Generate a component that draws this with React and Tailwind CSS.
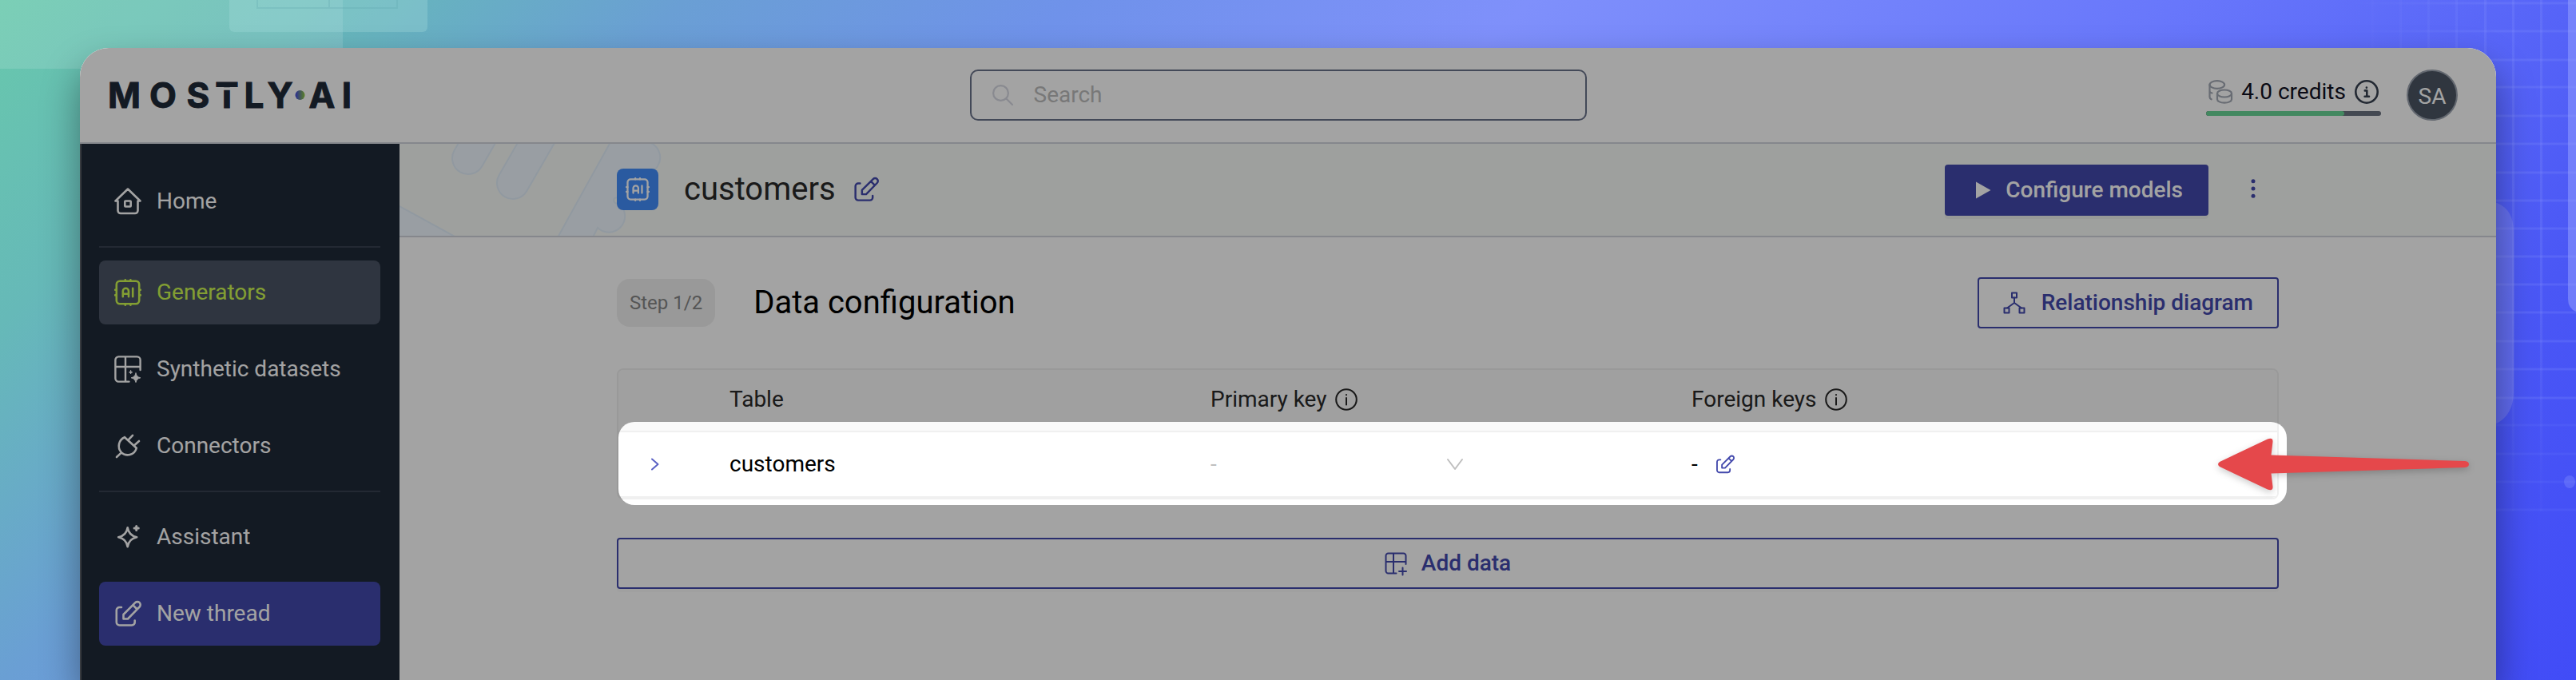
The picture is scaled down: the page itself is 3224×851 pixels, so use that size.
import React from "react";

function Icon({ box = 34, className = "", stroke = 2.6, children }) {
  return (
    <svg
      viewBox={`0 0 ${box} ${box}`}
      className={`shrink-0 overflow-visible ${className}`}
      fill="none"
      stroke="currentColor"
      strokeWidth={stroke}
      strokeLinecap="round"
      strokeLinejoin="round"
      aria-hidden="true"
    >
      {children}
    </svg>
  );
}

const HomeIcon = (p) => (
  <Icon {...p}>
    <path d="M1.5 16.5H4.5V28.5a3.5 3.5 0 0 0 3.5 3.5H26a3.5 3.5 0 0 0 3.5-3.5V16.5H32.5L17 1.5Z" />
    <rect x="13.3" y="16.5" width="7.4" height="7" rx="0.8" />
  </Icon>
);

const ChipIcon = (p) => (
  <Icon {...p}>
    <rect x="2.8" y="2.8" width="28.4" height="28.4" rx="4.2" />
    <path d="M13.8 2.8V1.2M20.4 2.8V1.2M13.8 31.2v1.6M20.4 31.2v1.6M2.8 13.8H1.2M2.8 20.4H1.2M31.2 13.8h1.6M31.2 20.4h1.6" />
    <path d="M10.8 22.2V15.4a3.6 3.6 0 0 1 7.2 0V22.2M10.8 18.8H18M23.2 11.8V22.2" />
  </Icon>
);

const DatasetIcon = (p) => (
  <Icon {...p} stroke={2.4}>
    <path d="M18.5 32.6H5.4a4 4 0 0 1-4-4V5.4a4 4 0 0 1 4-4H28.6a4 4 0 0 1 4 4V18M1.4 14H32.6M14 1.4V32.6" />
    <path
      d="M27 22c1 3.600 2.200 4.800 5.800 5.800-3.600 1-4.800 2.200-5.800 5.800-1-3.600-2.200-4.800-5.800-5.800 3.600-1 4.800-2.200 5.800-5.800ZM20.600 18.800c.4 1.300.8 1.700 2 2.100-1.200.4-1.600.8-2 2-.4-1.200-.8-1.600-2-2 1.200-.4 1.600-.8 2-2.100Z"
      fill="currentColor"
      strokeWidth="1"
    />
  </Icon>
);

const PlugIcon = (p) => (
  <Icon {...p}>
    <path d="M13 6.200 27.800 19.800M13 6.200C5.500 9.500 3.200 19 9 25.400 14.500 30.600 25.500 29 27.800 19.800M18 9.200l5-5.400M25.200 16.200l5.800-5.200M9 25.400 3 31" />
  </Icon>
);

const AssistantIcon = (p) => (
  <Icon {...p}>
    <path d="M16.700 5.200c1 6.600 4.200 10.500 11.500 12-7.300 1.500-10.500 5.200-11.500 12-1-6.800-4.200-10.500-11.500-12 7.300-1.500 10.500-5.400 11.500-12Z" />
    <path d="M27.700 3.400v5.200M25.100 6h5.200" strokeWidth="3" />
  </Icon>
);

const EditIcon = (p) => (
  <Icon {...p}>
    <path d="M9 9H6.500a3.700 3.700 0 0 0-3.700 3.700V27.800a3.700 3.700 0 0 0 3.700 3.700H22a3.700 3.700 0 0 0 3.700-3.700V25.500" />
    <path d="M11.500 23.500V18L26.300 3.200a3.700 3.700 0 0 1 5.300 5.300L17 23.500ZM23.300 6.200l5.300 5.300" />
  </Icon>
);

const AddTableIcon = (p) => (
  <Icon {...p} box={28} stroke={2}>
    <path d="M14.500 26.500H4.500a3 3 0 0 1-3-3V4.500a3 3 0 0 1 3-3h19a3 3 0 0 1 3 3V15M1.500 12h25M11 1.500v25M22.500 19.500v9M18 24h9" />
  </Icon>
);

const InfoIcon = ({ serif, ...p }) => (
  <Icon {...p} box={30}>
    <circle cx="15" cy="15" r="13.700" />
    {serif ? (
      <path d="M12.800 13.400H15.300V20.600M12.600 20.800h5.400M14.900 9.600v.2" />
    ) : (
      <path d="M15 13v9M15 8.600v.2" />
    )}
  </Icon>
);

const CoinsIcon = (p) => (
  <Icon {...p} box={30} stroke={2.2}>
    <ellipse cx="10.800" cy="6" rx="9.300" ry="4.800" />
    <path d="M1.500 6V21.500c0 1.300.8 2 2.200 2.800M1.500 14.500c.6.900 1.500 1.500 3 2" />
    <ellipse cx="20" cy="17" rx="9" ry="4.500" />
    <path d="M11 17v7.200c0 2.500 4 4.500 9 4.500s9-2 9-4.500V17" />
  </Icon>
);

const DiagramIcon = (p) => (
  <Icon {...p} box={28} stroke={2}>
    <rect x="11" y="1.500" width="6" height="6" />
    <rect x="1.500" y="20.500" width="6" height="6" />
    <rect x="20.500" y="20.500" width="6" height="6" />
    <path d="M14 7.500V14L5 20.500M14 14l9 6.500" />
  </Icon>
);

function Logo() {
  return (
    <a href="#home" aria-label="MOSTLY AI" className="block text-[#1f2937]">
      <svg viewBox="0 0 302 36" className="h-9 w-[302px] overflow-visible">
        <defs>
          <linearGradient id="logo-dot">
            <stop offset="0.1" stopColor="#4a52d8" />
            <stop offset="1" stopColor="#8ecb3a" />
          </linearGradient>
        </defs>
        <g
          fill="currentColor"
          stroke="currentColor"
          strokeWidth="1"
          textAnchor="middle"
          className="font-['Inter'] text-[44px] font-bold"
        >
          <text x="19.500 68 112 148 182 214.500" y="34">MOSTLY</text>
          <text x="267 298" y="34">AI</text>
        </g>
        <circle cx="239.500" cy="18" r="6" fill="url(#logo-dot)" />
        <path d="M133 10h30" stroke="#fff" strokeWidth="3.500" />
        <path d="M254 27.500h8" stroke="#fff" strokeWidth="0" />
      </svg>
    </a>
  );
}

function Header() {
  return (
    <header className="flex h-[120px] items-center justify-between border-b-2 border-[#d0d4dc] bg-white pr-12 pl-9">
      <Logo />
      <label className="flex h-16 w-[772px] items-center gap-[26px] rounded-[10px] border-2 border-[#6a728a] px-[26px]">
        <Icon box={26} stroke={2.2} className="size-[26px] text-[#d6d8e2]">
          <circle cx="10.500" cy="10.500" r="9.400" />
          <path d="M17.500 17.500 25 25" />
        </Icon>
        <input
          type="text"
          aria-label="Search"
          placeholder="Search"
          className="w-full bg-transparent text-[28px] outline-none placeholder:text-[#bcbcbc]"
        />
      </label>
      <div className="flex items-center gap-8">
        <div className="flex w-[219px] flex-col gap-[2px]">
          <div className="flex h-11 items-center justify-between px-[3px]">
            <CoinsIcon className="size-[30px] text-[#a3a9b5]" />
            <span className="text-[28px] text-[#111122]">4.0 credits</span>
            <InfoIcon serif className="size-[30px] text-[#374151]" />
          </div>
          <div className="h-[6px] overflow-hidden rounded-full bg-[#6b7280]">
            <div className="h-full w-[79%] rounded-full bg-[#6ad596]" />
          </div>
        </div>
        <button
          type="button"
          aria-label="Account SA"
          className="flex size-16 items-center justify-center rounded-full border-2 border-[#9ca3af] bg-[#4b5563] pt-1 text-[28px] text-white"
        >
          SA
        </button>
      </div>
    </header>
  );
}

function NavItem({ icon: I, label, className = "text-white" }) {
  return (
    <li>
      <a
        href={`#${label.toLowerCase().replace(" ", "-")}`}
        className={`flex h-20 items-center gap-[19px] rounded-lg pl-[19px] text-[28px] ${className}`}
      >
        <I className="size-[34px]" />
        {label}
      </a>
    </li>
  );
}

function Sidebar() {
  return (
    <nav
      aria-label="Main"
      className="w-[400px] shrink-0 border-l-2 border-[#565b63] bg-[#1f2937] pt-8 pr-6 pl-[22px]"
    >
      <ul className="flex flex-col gap-4">
        <NavItem icon={HomeIcon} label="Home" />
        <li role="separator" className="h-[2px] bg-[#374151]" />
        <NavItem icon={ChipIcon} label="Generators" className="bg-[#4a5364] text-[#cef850]" />
        <NavItem icon={DatasetIcon} label="Synthetic datasets" />
        <NavItem icon={PlugIcon} label="Connectors" />
        <li role="separator" className="h-[2px] bg-[#374151]" />
        <NavItem icon={AssistantIcon} label="Assistant" />
        <NavItem icon={EditIcon} label="New thread" className="bg-[#4349ac] text-white" />
      </ul>
    </nav>
  );
}

function BandPattern() {
  return (
    <svg
      className="absolute top-0 left-0 h-[115px] w-[340px]"
      viewBox="0 0 340 115"
      fill="#eff8ff"
      stroke="#e3effb"
      strokeWidth="2"
      aria-hidden="true"
    >
      <rect x="-20" y="-100" width="40" height="120" rx="20" transform="translate(86 18) rotate(30)" />
      <rect x="-20" y="-120" width="40" height="140" rx="20" transform="translate(142 49) rotate(30)" />
      <path d="M-2 77 71 117H-2Z" />
      <path d="M264-2 198 117H242L248 105A20 20 0 1 0 276 76L270 74Q267 72 269 68L300 60 323 28A20 20 0 0 0 312-2Z" />
    </svg>
  );
}

function TitleBand() {
  return (
    <div className="relative border-b-2 border-[#d0d4dc] bg-[#f8fbf8]">
      <BandPattern />
      <div className="relative mx-auto flex h-[115px] max-w-[2080px] items-center">
        <div className="flex items-center pb-[2px]">
          <span className="flex size-13 items-center justify-center rounded-lg bg-[#438dfa] text-white">
            <ChipIcon className="size-[30px]" />
          </span>
          <h1 className="ml-8 text-[40px] text-[#292929]">customers</h1>
          <button type="button" aria-label="Rename" className="ml-[22px] text-[#4349ac]">
            <EditIcon className="size-8" />
          </button>
        </div>
        <button
          type="button"
          className="ml-auto flex h-16 items-center gap-4 rounded bg-[#4349ac] px-8 text-[28px] font-medium text-white shadow-[0_4px_0_rgba(0,0,0,0.04)]"
        >
          <svg viewBox="0 0 28 28" className="size-7" fill="currentColor" aria-hidden="true">
            <path d="M7 3.500 25.500 14 7 24.500Z" />
          </svg>
          Configure models
        </button>
        <button
          type="button"
          aria-label="More actions"
          className="ml-6 flex size-16 items-center justify-center pb-1 text-[#4349ac]"
        >
          <svg viewBox="0 0 28 28" className="size-7" fill="currentColor" aria-hidden="true">
            <circle cx="14" cy="4.700" r="2.500" />
            <circle cx="14" cy="14" r="2.500" />
            <circle cx="14" cy="23.300" r="2.500" />
          </svg>
        </button>
      </div>
    </div>
  );
}

function Arrow() {
  return (
    <svg
      viewBox="0 0 314 66"
      className="absolute top-[87px] -right-[238px] z-20 h-[66px] w-[314px] overflow-visible drop-shadow-[0_3px_4px_rgba(0,0,0,0.2)]"
      fill="#e5484b"
      aria-hidden="true"
    >
      <path d="M2 30 62 1.500Q69-1 68.500 5L66.500 21.500 309 29Q314 29.500 314 33T309 37L66.500 44.500 68.500 61Q69 67 62 64.500L2 36Q-2 33 2 30Z" />
    </svg>
  );
}

function DataTable() {
  const th = "h-[78px] border-b-2 border-[#f0f0f0] px-4 pb-[2px] font-normal";
  const td = "h-[82px] border-b-2 border-[#f0f0f0]";
  return (
    <div className="relative">
      <div className="overflow-hidden rounded-lg border-2 border-[#f0f0f0]">
        <table className="w-full table-fixed border-separate border-spacing-0 text-left text-[28px] leading-10">
          <colgroup>
            <col className="w-[123px]" />
            <col className="w-[29%]" />
            <col className="w-[29%]" />
            <col />
          </colgroup>
          <thead>
            <tr className="bg-[#fafafa] text-[#292929]">
              <th aria-label="Expand" className={th} />
              <th className={th}>Table</th>
              <th className={th}>
                <span className="flex items-center gap-[10px]">
                  Primary key
                  <InfoIcon stroke={2.2} className="size-7" />
                </span>
              </th>
              <th className={th}>
                <span className="flex items-center gap-[10px]">
                  Foreign keys
                  <InfoIcon stroke={2.2} className="size-7" />
                </span>
              </th>
            </tr>
          </thead>
          <tbody>
            <tr className="bg-white text-black">
              <td className={`pl-8 ${td}`}>
                <button
                  type="button"
                  aria-label="Expand customers"
                  className="flex size-7 items-center justify-center text-[#5a61c4]"
                >
                  <Icon box={16} stroke={2} className="size-4">
                    <path d="M4 1.500 11.500 8 4 14.500" />
                  </Icon>
                </button>
              </td>
              <td className={`px-4 ${td}`}>customers</td>
              <td className={`px-4 ${td}`}>
                <label className="relative flex w-[316px] items-center text-[#bfbfbf]">
                  <select
                    aria-label="Primary key"
                    className="w-full appearance-none bg-transparent outline-none"
                  >
                    <option>-</option>
                  </select>
                  <Icon box={20} stroke={2} className="pointer-events-none absolute right-0 size-5">
                    <path d="M1 4 10 16 19 4" />
                  </Icon>
                </label>
              </td>
              <td className={`px-4 ${td}`}>
                <span className="flex items-center gap-[22px]">
                  -
                  <button type="button" aria-label="Edit foreign keys" className="text-[#4349ac]">
                    <EditIcon className="size-6" />
                  </button>
                </span>
              </td>
            </tr>
          </tbody>
        </table>
      </div>
      <div className="pointer-events-none absolute top-[67px] -right-[10px] left-[2px] z-10 h-[104px] rounded-[20px] shadow-[0_0_0_4000px_rgba(0,0,0,0.36)]" />
      <Arrow />
    </div>
  );
}

function Backdrop() {
  const columns = [2969, 3004, 3039, 3074, 3110, 3145, 3180];
  const rows = [4, 39, 75, 109, 145, 180, 216, 251, 286, 321, 356, 391, 427, 462, 498, 532, 568, 603, 638];
  return (
    <div className="absolute inset-0 overflow-hidden bg-[linear-gradient(135deg,#68c8ac_0%,#66b9b8_10%,#6a9fd4_21%,#6f92ea_33%,#7f90fb_47%,#6877fb_67%,#4a57f5_87%,#414cf7_100%)]">
      <svg className="absolute top-0 left-0 h-[90px] w-[540px]" viewBox="0 0 540 90" fill="none" aria-hidden="true">
        <path d="M0 0H429V86H0Z" fill="#fff" fillOpacity="0.13" />
        <path d="M287 0H535V34a6 6 0 0 1-6 6H293a6 6 0 0 1-6-6Z" fill="#a8dede" fillOpacity="0.3" />
        <path d="M322 0V10H497V0M412 0V10" stroke="#5aa5ad" strokeOpacity="0.25" strokeWidth="2" />
      </svg>
      <svg className="absolute top-0 right-0 h-[700px] w-[324px]" viewBox="2900 0 324 700" fill="none" aria-hidden="true">
        <defs>
          <linearGradient id="fade-x">
            <stop offset="0.1" stopColor="#fff" stopOpacity="0" />
            <stop offset="0.7" stopColor="#fff" />
          </linearGradient>
          <linearGradient id="fade-y" x2="0" y2="1">
            <stop offset="0.6" stopColor="#8e9cff" stopOpacity="0.2" />
            <stop offset="0.93" stopColor="#8e9cff" stopOpacity="0.04" />
          </linearGradient>
          <mask id="grid-mask" maskUnits="userSpaceOnUse" x="2900" y="0" width="324" height="700">
            <rect x="2900" y="0" width="324" height="700" fill="url(#fade-x)" />
          </mask>
        </defs>
        <g mask="url(#grid-mask)">
          {columns.map((x) => (
            <rect key={x} x={x - 1} y="0" width="3" height="640" fill="url(#fade-y)" />
          ))}
          {rows.map((y) => (
            <path
              key={y}
              d={`M2900 ${y}H3224`}
              stroke="#8e9cff"
              strokeWidth="3"
              strokeOpacity={y > 530 ? 0.1 : 0.2}
            />
          ))}
        </g>
        <path d="M3100 250C3130 250 3146 262 3146 290V490C3146 518 3130 535 3100 535Z" fill="#8f95e8" fillOpacity="0.35" />
        <path d="M3214 0H3224V390Q3214 386 3214 374Z" fill="#98a4ff" fillOpacity="0.5" />
        <ellipse cx="3216" cy="603" rx="7" ry="8" fill="#8e9cff" fillOpacity="0.3" />
      </svg>
    </div>
  );
}

export default function App() {
  return (
    <div className="relative flex min-h-screen flex-col overflow-hidden px-[100px] pt-[60px] font-['Roboto',sans-serif]">
      <Backdrop />
      <div className="relative flex grow flex-col overflow-hidden rounded-t-[36px] bg-white shadow-[0_24px_48px_rgba(0,0,0,0.4)]">
        <Header />
        <div className="flex grow">
          <Sidebar />
          <main className="min-w-0 grow bg-white">
            <TitleBand />
            <section className="mx-auto max-w-[2080px] pt-[50px]">
              <div className="mb-[50px] flex items-center">
                <span className="flex h-[60px] items-center rounded-2xl bg-[#f0f0f0] px-4 text-2xl text-[#858585]">
                  Step 1/2
                </span>
                <h2 className="ml-12 text-[40px] leading-[60px] text-black">Data configuration</h2>
                <button
                  type="button"
                  className="ml-auto flex h-16 items-center gap-5 rounded border-2 border-[#4349ac] px-[30px] text-[28px] font-medium text-[#4349ac]"
                >
                  <DiagramIcon className="size-7" />
                  Relationship diagram
                </button>
              </div>
              <DataTable />
              <button
                type="button"
                className="mt-12 flex h-16 w-full items-center justify-center gap-[18px] rounded border-2 border-[#4349ac] text-[28px] font-medium text-[#4349ac] shadow-[0_4px_0_rgba(0,0,0,0.02)]"
              >
                <AddTableIcon className="size-7" />
                Add data
              </button>
            </section>
          </main>
        </div>
      </div>
    </div>
  );
}
